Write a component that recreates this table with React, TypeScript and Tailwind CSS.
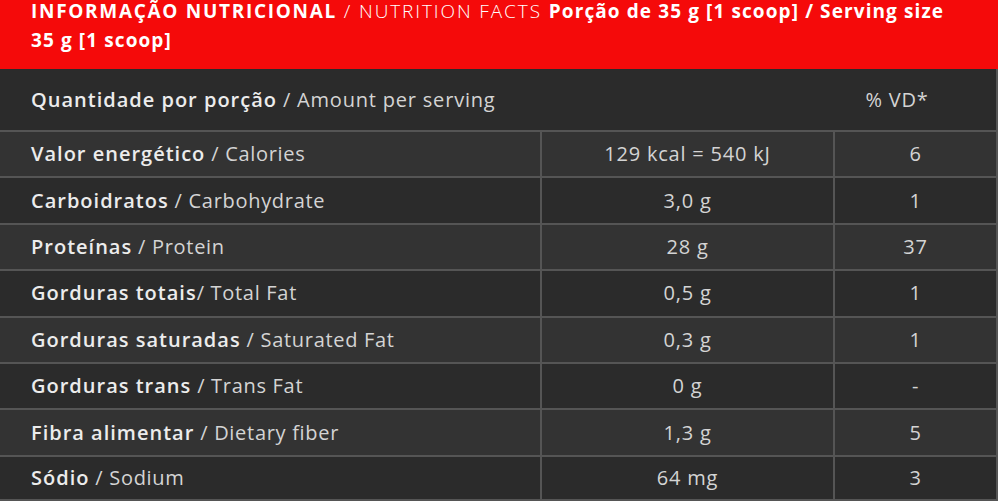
import React from 'react';

const rows: { pt: string; en: string; value: string; vd: string; sep?: string }[] = [
  { pt: 'Valor energético', en: 'Calories', value: '129 kcal = 540 kJ', vd: '6' },
  { pt: 'Carboidratos', en: 'Carbohydrate', value: '3,0 g', vd: '1' },
  { pt: 'Proteínas', en: 'Protein', value: '28 g', vd: '37' },
  { pt: 'Gorduras totais', en: 'Total Fat', value: '0,5 g', vd: '1', sep: '/ ' },
  { pt: 'Gorduras saturadas', en: 'Saturated Fat', value: '0,3 g', vd: '1' },
  { pt: 'Gorduras trans', en: 'Trans Fat', value: '0 g', vd: '-' },
  { pt: 'Fibra alimentar', en: 'Dietary fiber', value: '1,3 g', vd: '5' },
  { pt: 'Sódio', en: 'Sodium', value: '64 mg', vd: '3' },
];

export default function App() {
  return (
    <div
      className="h-[503px] w-[1000px] overflow-hidden bg-white text-[20px]"
      style={{ fontFamily: '"Open Sans", "DejaVu Sans", sans-serif' }}
    >
      <div className="w-[998px]">
        {/* Title bar */}
        <div className="flex h-[69px] flex-col gap-[7px] bg-[#f50a0a] pl-[31px] pr-[40px] text-[19px] leading-[22px] text-white">
          <div className="whitespace-nowrap">
            <span className="font-bold tracking-[1.7px]">INFORMAÇÃO NUTRICIONAL</span>
            <span className="font-light tracking-[1.9px]"> / NUTRITION FACTS </span>
            <span className="font-bold tracking-[1.1px]">Porção de 35 g [1 scoop] / Serving size</span>
          </div>
          <div className="font-bold tracking-[1.1px]">35 g [1 scoop]</div>
        </div>

        {/* Table */}
        <div className="border-r-2 border-[#555] bg-[#2b2b2b]">
          <div className="flex h-[61px] items-center">
            <div className="flex-1 pl-[31px] text-[#ececec]">
              <span className="font-semibold tracking-[1px]">Quantidade por porção</span>
              <span className="tracking-[0.8px] text-[#d4d4d4]"> / Amount per serving</span>
            </div>
            <div className="w-[162px] pr-[36px] text-center tracking-[0.8px] text-[#d4d4d4]">% VD*</div>
          </div>
          {rows.map((r, i) => (
            <div
              key={r.pt}
              className={`flex h-[46.4px] border-t-2 border-[#555] ${i % 2 === 0 ? 'bg-[#333333]' : 'bg-[#2b2b2b]'} ${i === rows.length - 1 ? 'border-b-2' : ''}`}
            >
              <div className="flex w-[540px] items-center pl-[31px]">
                <span className="font-semibold tracking-[1px] text-[#ececec]">{r.pt}</span>
                <span className="whitespace-pre tracking-[0.7px] text-[#d4d4d4]">{r.sep ?? ' / '}{r.en}</span>
              </div>
              <div className="flex w-[293px] items-center justify-center border-l-2 border-[#555] tracking-[0.8px] text-[#d4d4d4]">
                {r.value}
              </div>
              <div className="flex flex-1 items-center justify-center border-l-2 border-[#555] tracking-[0.8px] text-[#d4d4d4]">
                {r.vd}
              </div>
            </div>
          ))}
        </div>
      </div>
    </div>
  );
}
